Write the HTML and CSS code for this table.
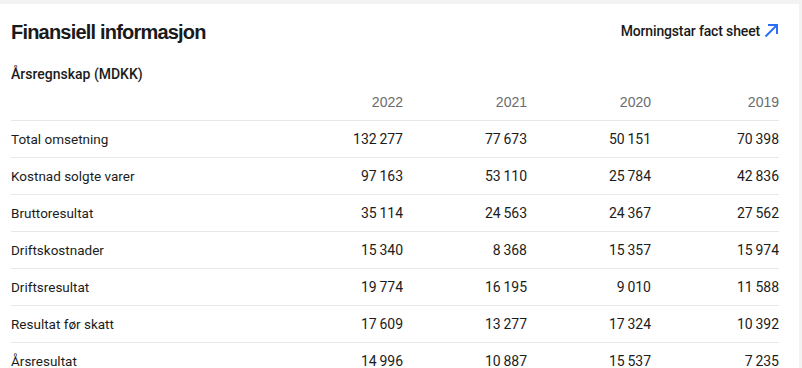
FILE: index.html
```html
<!DOCTYPE html>
<html lang="no">
<head>
<meta charset="utf-8">
<link rel="stylesheet" href="styles.css">
</head>
<body>
<section class="card">
  <header class="card-head">
    <h2 class="title">Finansiell informasjon</h2>
    <a class="ext-link" href="#">Morningstar fact sheet
      <svg class="arrow" width="15" height="15" viewBox="0 0 15 15" aria-hidden="true"><path d="M1.5 13.5 L13 2 M4 2 H13 V11" fill="none" stroke="#2d6ef6" stroke-width="2"/></svg>
    </a>
  </header>
  <h3 class="subtitle">Årsregnskap (MDKK)</h3>
  <div class="table">
    <div class="row head">
      <span></span><span class="num">2022</span><span class="num">2021</span><span class="num">2020</span><span class="num">2019</span>
    </div>
    <div class="row"><span>Total omsetning</span><span class="num">132 277</span><span class="num">77 673</span><span class="num">50 151</span><span class="num">70 398</span></div>
    <div class="row"><span>Kostnad solgte varer</span><span class="num">97 163</span><span class="num">53 110</span><span class="num">25 784</span><span class="num">42 836</span></div>
    <div class="row"><span>Bruttoresultat</span><span class="num">35 114</span><span class="num">24 563</span><span class="num">24 367</span><span class="num">27 562</span></div>
    <div class="row"><span>Driftskostnader</span><span class="num">15 340</span><span class="num">8 368</span><span class="num">15 357</span><span class="num">15 974</span></div>
    <div class="row"><span>Driftsresultat</span><span class="num">19 774</span><span class="num">16 195</span><span class="num">9 010</span><span class="num">11 588</span></div>
    <div class="row"><span>Resultat før skatt</span><span class="num">17 609</span><span class="num">13 277</span><span class="num">17 324</span><span class="num">10 392</span></div>
    <div class="row"><span>Årsresultat</span><span class="num">14 996</span><span class="num">10 887</span><span class="num">15 537</span><span class="num">7 235</span></div>
  </div>
</section>
</body>
</html>
```
FILE: styles.css
```css
html, body {
  margin: 0;
  padding: 0;
  background: #f3f3f3;
}
body {
  padding-top: 4px;
  padding-right: 3px;
  height: 368px;
  overflow: hidden;
  font-family: "Roboto", "Liberation Sans", sans-serif;
  color: #1c1c1c;
}
.card {
  background: #fff;
  padding: 0 20px 0 11px;
  height: 400px;
}
.card-head {
  display: flex;
  justify-content: space-between;
  align-items: center;
  padding-top: 16px;
}
.title {
  margin: 0;
  font-family: "Liberation Sans", Arial, sans-serif;
  font-weight: 700;
  font-size: 20px;
  line-height: 24px;
  color: #1a1a1a;
  letter-spacing: -0.8px;
}
.ext-link {
  display: flex;
  align-items: center;
  gap: 4px;
  text-decoration: none;
  color: #1a1a1a;
  font-size: 14px;
  font-weight: 500;
  letter-spacing: -0.15px;
  margin-top: -3px;
}
.arrow { display: block; }
.subtitle {
  margin: 0;
  padding-top: 21px;
  font-size: 14px;
  font-weight: 500;
  line-height: 18px;
}
.table {
  margin-top: 1px;
}
.row {
  display: grid;
  grid-template-columns: 1fr 124px 124px 124px 128px;
  align-items: center;
  height: 37px;
  border-top: 1px solid #e8e8e8;
  font-size: 13.5px;
  box-sizing: border-box;
}
.row.head {
  border-top: none;
  height: 36px;
  font-family: "Liberation Sans", Arial, sans-serif;
  font-size: 14px;
  color: #6b6b6b;
}
.num {
  text-align: right;
  font-size: 14px;
  word-spacing: -0.8px;
}
```
